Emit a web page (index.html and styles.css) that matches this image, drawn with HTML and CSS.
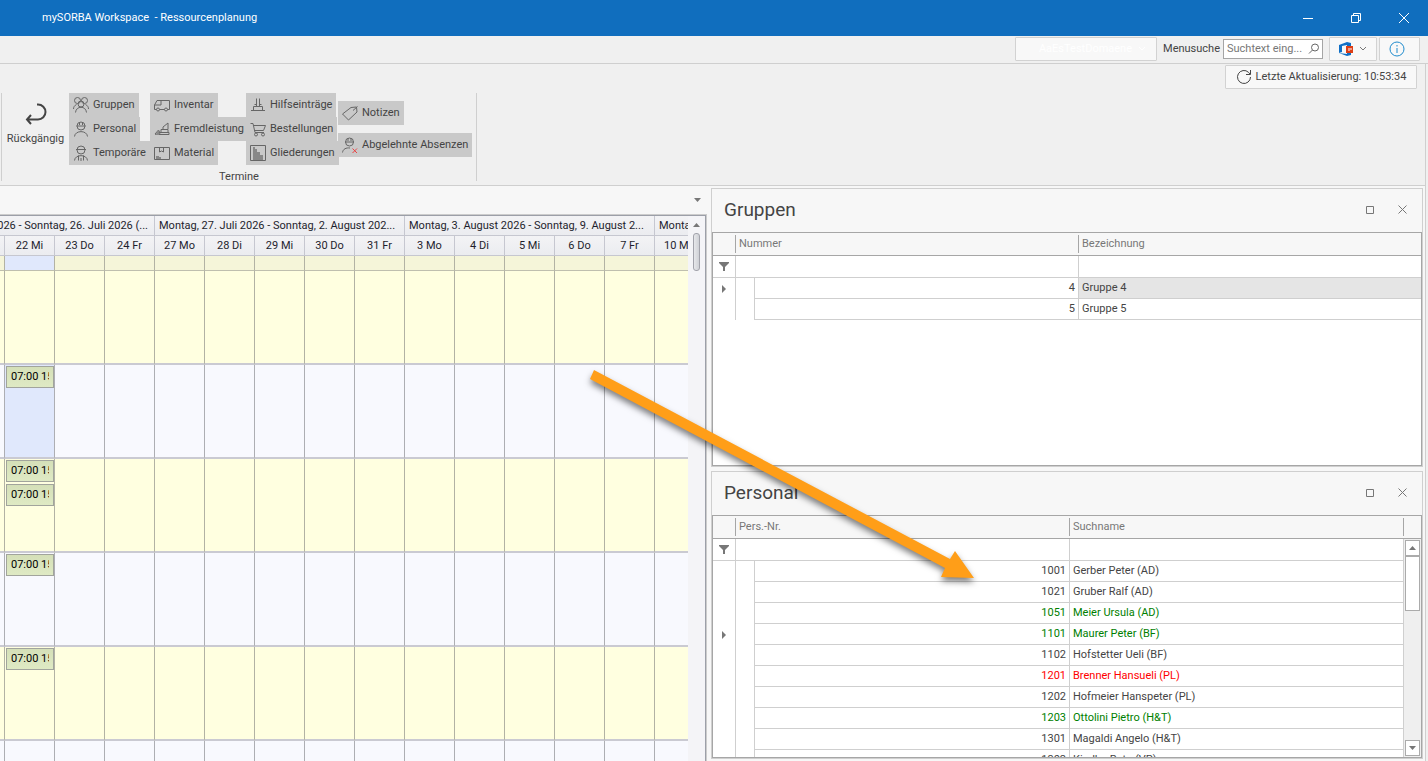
FILE: index.html
```
<!DOCTYPE html>
<html lang="de">
<head>
<meta charset="utf-8">
<title>mySORBA Workspace - Ressourcenplanung</title>
<link rel="stylesheet" href="styles.css">
</head>
<body>

<header class="titlebar">
  <h1>mySORBA Workspace&nbsp; - Ressourcenplanung</h1>
  <div class="window-buttons">
    <button type="button" aria-label="Minimieren"><svg width="12" height="12"><path d="M1 6.500h10"/></svg></button>
    <button type="button" aria-label="Wiederherstellen"><svg width="12" height="12"><path d="M1.500 3.500h7v7h-7zM3.500 3.500v-2h7v7h-2"/></svg></button>
    <button type="button" aria-label="Schliessen"><svg width="12" height="12"><path d="M1 1l10 10M11 1L1 11"/></svg></button>
  </div>
</header>

<div class="searchbar">
  <button type="button" class="btn domain">AaEsTestDomaene
    <svg width="8" height="6"><path d="M1 1l3 3 3-3"/></svg></button>
  <label for="menusuche">Menusuche</label>
  <div class="searchbox">
    <input type="text" id="menusuche" placeholder="Suchtext eing...">
    <svg width="12" height="12"><circle cx="7" cy="4.500" r="3.500"/><path d="M4.500 7L1 10.500"/></svg>
  </div>
  <button type="button" class="btn office" aria-label="Office">
    <svg width="15" height="14"><path fill="#0f6fc6" d="M0 3l8-3 4 1v12l-4 1-8-3 8 1V3L3 4v6L0 11z"/><path fill="#dc3e15" d="M7 4h7v7H7z"/><path fill="#fff" d="M9 6h4v2h-2v1H9z" opacity=".5"/></svg>
    <svg class="chevron" width="8" height="6"><path d="M1 1l3 3 3-3"/></svg>
  </button>
  <button type="button" class="btn info" aria-label="Info">
    <svg width="16" height="16"><circle cx="8" cy="8" r="7"/><path d="M8 7v5M8 4v1.500"/></svg>
  </button>
</div>

<section class="ribbon">
  <div class="refresh">
    <button type="button" class="btn">
      <svg width="16" height="16"><path d="M14.500 8A6.500 6.500 0 1 1 12.500 3.300L14 5M14.500 1v4.500H10"/></svg>
      Letzte Aktualisierung: 10:53:34
    </button>
  </div>
  <div class="group">
    <div class="tools">
      <button type="button" class="undo">
        <svg width="22" height="22"><path d="M12 1.500h1a7 7 0 0 1 0 15H2M6 12l-4 4.500L6 21"/></svg>
        Rückgängig
      </button>
      <div class="col c1">
        <button type="button" class="tool"><svg width="16" height="16"><circle cx="4.500" cy="3.500" r="3"/><circle cx="11.500" cy="3.500" r="3"/><circle cx="8" cy="7" r="3"/><path d="M2.500 15.500c.5-7 10.500-7 11 0M.5 12c0-2 1-3.500 3-4.500M15.500 12c0-2-1-3.500-3-4.500"/></svg>Gruppen</button>
        <button type="button" class="tool"><svg width="16" height="16"><circle cx="8" cy="5" r="4"/><path d="M3.500 5h9M6.500 1v3M9.500 1v3M1.500 15.500c.5-6.500 12.500-6.500 13 0"/></svg>Personal</button>
        <button type="button" class="tool"><svg width="16" height="16"><circle cx="8" cy="5" r="4"/><path d="M3 4.500h10M1.500 15.500c.5-6.500 12.500-6.500 13 0M5.500 10.500v5M10.500 10.500v5M8 13v3"/></svg>Temporäre</button>
      </div>
      <div class="col c2">
        <button type="button" class="tool"><svg width="16" height="16"><path d="M2.500 12.500h-2V8L3 3.500h12.500v9h-2M5.500 12.500h5M7 3.500V8H.5"/><circle cx="4" cy="12.500" r="1.500"/><circle cx="12" cy="12.500" r="1.500"/></svg>Inventar</button>
        <button type="button" class="tool"><svg width="16" height="16"><path d="M6 13.500h9v-2H5.500zM7 11V8.500h7V11M9 8V6l5-4v6M1 13.500h5M1 13l3.500-4L6 12"/><path class="solid" d="M1 14l4-5v5z"/></svg>Fremdleistung</button>
        <button type="button" class="tool"><svg width="16" height="16"><path d="M.5 2.500h15v12H.5zM5.500 3v4l2-1 2 1V3"/><path class="solid" d="M2 14v-3h3v1h2v2z"/></svg>Material</button>
      </div>
      <div class="col c3">
        <button type="button" class="tool"><svg width="16" height="16"><path d="M6.500 1.500v8M9.500 1.500v8M3.500 9.500h9M1 13.500h14M3.500 9.500v4M12.500 9.500v4M4.500 7.500h2M9.500 7.500h2"/></svg>Hilfseinträge</button>
        <button type="button" class="tool"><svg width="16" height="16"><path d="M.5 2.500h2.500l2 9h9M3.500 4.500h12l-2 5h-9"/><circle cx="6" cy="13.500" r="1.500"/><circle cx="13" cy="13.500" r="1.500"/></svg>Bestellungen</button>
        <button type="button" class="tool"><svg width="16" height="16"><path d="M.5.500h15v15H.5z"/><path class="solid" d="M3 2h2v2h2v3h3v3h3v5H3z"/></svg>Gliederungen</button>
      </div>
      <div class="col c4">
        <button type="button" class="tool"><svg width="16" height="16"><path d="M.5 9L9 2.500l5.500-.5.500 5L6.500 15zM11 5.500l4.500-4"/></svg>Notizen</button>
        <button type="button" class="tool"><svg width="16" height="16"><circle cx="7.500" cy="5" r="4"/><path d="M3 5h9M6 1v3M9 1v3M.5 15.500C1 12 4 10.500 8 11"/><path class="cross" d="M10.500 11.500l4.500 4.500M15 11.500l-4.500 4.500"/></svg>Abgelehnte Absenzen</button>
      </div>
    </div>
    <div class="caption">Termine</div>
  </div>
</section>

<main class="workspace">

  <section class="planner">
    <div class="tabstrip"><button type="button" aria-label="Fenster"><svg width="7" height="4"><path d="M0 0h7L3.500 4z"/></svg></button></div>
    <div class="schedule">
      <div class="viewport">
        <table class="calendar">
          <thead>
            <tr class="weeks">
              <th colspan="5" class="cut">Montag, 20. Juli 2026 - Sonntag, 26. Juli 2026 (...</th>
              <th colspan="5">Montag, 27. Juli 2026 - Sonntag, 2. August 202...</th>
              <th colspan="5">Montag, 3. August 2026 - Sonntag, 9. August 2...</th>
              <th colspan="5">Montag, 10. August 2026 - Sonntag, 16. Augus...</th>
            </tr>
            <tr class="days">
              <th>20 Mo</th><th>21 Di</th><th>22 Mi</th><th>23 Do</th><th>24 Fr</th>
              <th>27 Mo</th><th>28 Di</th><th>29 Mi</th><th>30 Do</th><th>31 Fr</th>
              <th>3 Mo</th><th>4 Di</th><th>5 Mi</th><th>6 Do</th><th>7 Fr</th>
              <th>10 Mo</th><th>11 Di</th><th>12 Mi</th><th>13 Do</th><th>14 Fr</th>
            </tr>
          </thead>
          <tbody>
            <tr class="allday"><td></td><td></td><td class="sel"></td><td></td><td></td><td></td><td></td><td></td><td></td><td></td><td></td><td></td><td></td><td></td><td></td><td></td><td></td><td></td><td></td><td></td></tr>
            <tr class="res"><td></td><td></td><td></td><td></td><td></td><td></td><td></td><td></td><td></td><td></td><td></td><td></td><td></td><td></td><td></td><td></td><td></td><td></td><td></td><td></td></tr>
            <tr class="res alt"><td></td><td></td><td class="sel"><div class="appt"><span>07:00 15:00</span></div></td><td></td><td></td><td></td><td></td><td></td><td></td><td></td><td></td><td></td><td></td><td></td><td></td><td></td><td></td><td></td><td></td><td></td></tr>
            <tr class="res"><td></td><td></td><td><div class="appt"><span>07:00 15:00</span></div><div class="appt"><span>07:00 15:00</span></div></td><td></td><td></td><td></td><td></td><td></td><td></td><td></td><td></td><td></td><td></td><td></td><td></td><td></td><td></td><td></td><td></td><td></td></tr>
            <tr class="res alt"><td></td><td></td><td><div class="appt"><span>07:00 15:00</span></div></td><td></td><td></td><td></td><td></td><td></td><td></td><td></td><td></td><td></td><td></td><td></td><td></td><td></td><td></td><td></td><td></td><td></td></tr>
            <tr class="res"><td></td><td></td><td><div class="appt"><span>07:00 15:00</span></div></td><td></td><td></td><td></td><td></td><td></td><td></td><td></td><td></td><td></td><td></td><td></td><td></td><td></td><td></td><td></td><td></td><td></td></tr>
            <tr class="res alt"><td></td><td></td><td></td><td></td><td></td><td></td><td></td><td></td><td></td><td></td><td></td><td></td><td></td><td></td><td></td><td></td><td></td><td></td><td></td><td></td></tr>
          </tbody>
        </table>
      </div>
      <div class="vscroll">
        <svg width="7" height="4"><path d="M0 4h7L3.500 0z"/></svg>
        <div class="thumb"></div>
      </div>
    </div>
  </section>

  <div class="panels">
    <section class="panel">
      <div class="panel-head">
        <h2>Gruppen</h2>
        <button type="button" aria-label="Maximieren"><svg width="8" height="8"><path d="M.5.500h7v7h-7z"/></svg></button>
        <button type="button" aria-label="Schliessen"><svg width="9" height="9"><path d="M.5.500l8 8M8.500.500l-8 8"/></svg></button>
      </div>
      <div class="grid">
        <table class="data">
          <colgroup><col class="mark"><col class="indent"><col class="num-g"><col></colgroup>
          <thead>
            <tr><th><div>&nbsp;</div></th><th colspan="2"><div>Nummer</div></th><th class="last"><div>Bezeichnung</div></th></tr>
            <tr class="filter">
              <td class="icon"><svg width="10" height="9"><path d="M0 0h10v1L6 5v4H4V5L0 1z"/></svg></td>
              <td colspan="2"><input type="text" aria-label="Filter Nummer"></td>
              <td class="last"><input type="text" aria-label="Filter Bezeichnung"></td>
            </tr>
          </thead>
          <tbody>
            <tr><td class="icon"><svg width="10" height="8"><path d="M3 0l4 4-4 4z"/></svg></td><td></td><td class="num">4</td><td class="last focused">Gruppe 4</td></tr>
            <tr><td></td><td></td><td class="num">5</td><td class="last">Gruppe 5</td></tr>
          </tbody>
        </table>
      </div>
    </section>

    <section class="panel">
      <div class="panel-head">
        <h2>Personal</h2>
        <button type="button" aria-label="Maximieren"><svg width="8" height="8"><path d="M.5.500h7v7h-7z"/></svg></button>
        <button type="button" aria-label="Schliessen"><svg width="9" height="9"><path d="M.5.500l8 8M8.500.500l-8 8"/></svg></button>
      </div>
      <div class="grid">
        <table class="data">
          <colgroup><col class="mark"><col class="indent"><col class="num-p"><col></colgroup>
          <thead>
            <tr><th><div>&nbsp;</div></th><th colspan="2"><div>Pers.-Nr.</div></th><th><div>Suchname</div></th></tr>
            <tr class="filter">
              <td class="icon"><svg width="10" height="9"><path d="M0 0h10v1L6 5v4H4V5L0 1z"/></svg></td>
              <td colspan="2"><input type="text" aria-label="Filter Pers.-Nr."></td>
              <td><input type="text" aria-label="Filter Suchname"></td>
            </tr>
          </thead>
          <tbody>
            <tr><td></td><td></td><td class="num">1001</td><td>Gerber Peter (AD)</td></tr>
            <tr><td></td><td></td><td class="num">1021</td><td>Gruber Ralf (AD)</td></tr>
            <tr class="green"><td></td><td></td><td class="num">1051</td><td>Meier Ursula (AD)</td></tr>
            <tr class="green"><td class="icon"><svg width="10" height="8"><path d="M3 0l4 4-4 4z"/></svg></td><td></td><td class="num">1101</td><td>Maurer Peter (BF)</td></tr>
            <tr><td></td><td></td><td class="num">1102</td><td>Hofstetter Ueli (BF)</td></tr>
            <tr class="red"><td></td><td></td><td class="num">1201</td><td>Brenner Hansueli (PL)</td></tr>
            <tr><td></td><td></td><td class="num">1202</td><td>Hofmeier Hanspeter (PL)</td></tr>
            <tr class="green"><td></td><td></td><td class="num">1203</td><td>Ottolini Pietro (H&amp;T)</td></tr>
            <tr><td></td><td></td><td class="num">1301</td><td>Magaldi Angelo (H&amp;T)</td></tr>
            <tr><td></td><td></td><td class="num">1302</td><td>Kindler Reto (VP)</td></tr>
          </tbody>
        </table>
        <div class="scrollbar">
          <button type="button" aria-label="Nach oben"><svg width="7" height="4"><path d="M0 4h7L3.500 0z"/></svg></button>
          <div class="thumb"></div>
          <button type="button" class="down" aria-label="Nach unten"><svg width="7" height="4"><path d="M0 0h7L3.500 4z"/></svg></button>
        </div>
      </div>
    </section>
  </div>
</main>

<!-- drag & drop hint -->
<svg class="arrow" width="1428" height="761" viewBox="0 0 1428 761">
  <path d="M594 370L950 559 955 551 974 578 941 577 945 568 590 379z"/>
</svg>

</body>
</html>
```
FILE: styles.css
```
* { box-sizing: border-box; }
body {
  margin: 0;
  height: 100vh;
  overflow: hidden;
  position: relative;
  display: flex;
  flex-direction: column;
  background: #f0f0f0;
  color: #444;
  font: 11px/14px Roboto, sans-serif;
}
button, input { font: inherit; color: inherit; padding: 0; border: 0; background: none; }
svg { display: block; flex: none; fill: none; stroke: currentColor; }
h1, h2 { margin: 0; font-weight: normal; }

/* title bar */
.titlebar {
  flex: none;
  height: 36px;
  padding-left: 42px;
  display: flex;
  align-items: center;
  justify-content: space-between;
  background: #106ebe;
  color: #fff;
}
.titlebar h1 { font-size: 11px; }
.window-buttons { display: flex; height: 100%; }
.window-buttons button { width: 48px; display: flex; align-items: center; justify-content: center; }

/* search row */
.btn {
  height: 24px;
  display: flex;
  align-items: center;
  justify-content: center;
  background: #f8f8f8;
  border: 1px solid #d2d2d2;
  border-radius: 1px;
}
.searchbar {
  flex: none;
  height: 28px;
  padding: 1px 8px 0 0;
  display: flex;
  align-items: flex-start;
  justify-content: flex-end;
  border-bottom: 1px solid #cfcfcf;
}
.searchbar label { margin: 5px 3px 0 6px; }
.domain { width: 142px; padding-right: 10px; gap: 6px; justify-content: flex-end; color: #fff; }
.searchbox {
  width: 100px;
  height: 20px;
  margin: 2px 6px 0 0;
  padding: 0 2px 0 3px;
  display: flex;
  align-items: center;
  background: #fff;
  border: 1px solid #a5a5a5;
  color: #666;
}
.searchbox input { flex: 1; min-width: 0; outline: 0; }
.searchbox input::placeholder { color: #777; opacity: 1; }
.office { width: 48px; gap: 5px; margin-right: 2px; }
.office svg { stroke: none; }
.office .chevron { stroke: #777; }
.info { width: 41px; padding-right: 5px; color: #1e8bcd; }

/* ribbon */
.ribbon {
  flex: none;
  height: 122px;
  margin-right: 2px;
  border-right: 1px solid #cfcfcf;
  border-bottom: 1px solid #cfcfcf;
}
.refresh { display: flex; justify-content: flex-end; padding: 1px 8px 0 0; }
.refresh .btn { width: 192px; gap: 4px; }
.group {
  width: 476px;
  height: 88px;
  margin: 4px 0 0 1px;
  border: solid #cfcfcf;
  border-width: 0 1px;
}
.tools { display: flex; height: 72px; }
.caption { text-align: center; line-height: 24px; }
.undo {
  flex: none;
  width: 67px;
  padding: 10px 0 19px;
  display: flex;
  flex-direction: column;
  align-items: center;
  justify-content: space-between;
}
.undo svg { stroke-width: 2; }
.col { flex: none; display: flex; flex-direction: column; align-items: flex-start; }
.c1 { width: 81px; }
.c2 { width: 96px; }
.c3 { width: 92px; }
.c4 { padding-top: 8px; gap: 8px; }
.tool {
  height: 24px;
  padding: 0 4px;
  display: flex;
  align-items: center;
  gap: 4px;
  background: #c9c9c9;
  white-space: nowrap;
}
.tool svg { color: #666; }
.tool .solid { fill: #888; stroke: none; }
.tool .cross { stroke: #e84545; }

/* workspace */
.workspace {
  flex: 1;
  min-height: 0;
  margin-right: 2px;
  padding-right: 2px;
  border-right: 1px solid #cfcfcf;
  display: grid;
  grid-template-columns: 707fr 712fr;
  grid-template-rows: 100%;
  gap: 4px;
  background: #f7f7f7;
}
.planner { min-width: 0; display: flex; flex-direction: column; }
.tabstrip {
  flex: none;
  height: 28px;
  padding-right: 6px;
  display: flex;
  justify-content: flex-end;
}
.tabstrip svg, .vscroll svg, .icon svg, .scrollbar svg { fill: #777; stroke: none; }
.schedule {
  flex: 1;
  min-height: 0;
  display: flex;
  border: solid #ccc;
  border-width: 1px 1px 0 0;
}
.viewport { flex: 1; min-width: 0; overflow: hidden; border-top: 1px solid #9c9fa8; }
.vscroll {
  width: 18px;
  padding: 7px 4px;
  display: flex;
  flex-direction: column;
  align-items: center;
  gap: 6px;
  background: #f4f4f7;
  border: solid #9c9fa8;
  border-width: 1px 1px 0 0;
}
.vscroll .thumb {
  width: 7px;
  height: 38px;
  border: 1px solid #a2a3ab;
  border-radius: 3px;
  background: linear-gradient(90deg, #e6e7ea, #cfd1d6);
}

/* scrolled to wednesday, the first two days are out of view */
.calendar {
  width: 1000px;
  margin-left: -95px;
  table-layout: fixed;
  border-spacing: 0;
  color: #1e1e2d;
}
.calendar th, .calendar td { padding: 0; border-right: 1px solid #b2b2a4; }
.calendar th {
  height: 20px;
  font-weight: normal;
  line-height: 18px;
  white-space: nowrap;
  overflow: hidden;
  background: linear-gradient(#f3f3f5, #ebecf0);
  border-right-color: #c6c7d0;
  border-bottom: 1px solid #c6c7d0;
}
.weeks th { padding: 0 4px; text-align: left; }
.weeks .cut { text-align: right; padding-right: 6px; }
.allday td { height: 15px; background: #f5f5d9; border-bottom: 1px solid #bfbfae; }
.res td { height: 94px; vertical-align: top; background: #ffffe0; border-bottom: 2px solid #cacad2; }
.alt td { background: #f8f9fe; border-right-color: #adaeb3; }
.calendar td.sel { background: #e0e8fc; }
.appt {
  height: 22px;
  margin: 1px 0 2px 1px;
  padding: 0 4px;
  background: linear-gradient(#d5e0b8, #dfeac4);
  border: 1px solid #a1a49c;
  color: #000;
}
.appt span { display: block; line-height: 20px; overflow: hidden; white-space: nowrap; }

/* docked panels */
.panels {
  min-width: 0;
  padding: 2px 0;
  display: grid;
  grid-template-rows: 279fr 288fr;
  gap: 4px;
}
.panel {
  min-height: 0;
  display: flex;
  flex-direction: column;
  border: 1px solid #cfcfcf;
}
.panel-head {
  flex: none;
  height: 43px;
  padding: 0 15px 2px 12px;
  display: flex;
  align-items: center;
  gap: 24px;
  color: #777;
}
.panel-head h2 { flex: 1; font-size: 19px; line-height: 24px; color: #444; }
.grid {
  flex: 1;
  min-height: 0;
  display: flex;
  align-items: flex-start;
  overflow: hidden;
  background: #fff;
  border: 1px solid #a6a6a6;
}
.data { flex: 1; min-width: 0; width: 100%; table-layout: fixed; border-spacing: 0; }
.mark { width: 23px; }
.indent { width: 19px; }
.num-g { width: 324px; }
.num-p { width: 315px; }
.data th {
  height: 23px;
  padding: 2px 0;
  background: #f7f7f7;
  border-bottom: 1px solid #a6a6a6;
  color: #777;
  font-weight: normal;
  text-align: left;
}
.data th div { height: 18px; line-height: 18px; padding-left: 3px; border-right: 1px solid #a6a6a6; }
.data td {
  height: 21px;
  padding: 0 3px;
  line-height: 18px;
  border: solid #cfcfcf;
  border-width: 0 1px 1px 0;
}
.data tbody td:nth-child(-n+2) { border-bottom: 0; }
.data .filter td { height: 22px; }
.filter input { display: block; width: 100%; height: 18px; outline: 0; }
.data td.icon { padding: 0 0 0 6px; }
.num { text-align: right; }
.data th.last div, .data td.last { border-right: 0; }
.focused { background: #e5e5e5; }
.green { color: #008000; }
.red { color: #f00; }

.scrollbar {
  flex: none;
  align-self: stretch;
  width: 17px;
  padding: 24px 1px 1px;
  display: flex;
  flex-direction: column;
  align-items: center;
  background: linear-gradient(#f7f7f7 22px, #a6a6a6 22px, #a6a6a6 23px, #efefef 23px);
}
.scrollbar button, .scrollbar .thumb {
  flex: none;
  width: 15px;
  height: 16px;
  display: flex;
  align-items: center;
  justify-content: center;
  background: #fff;
  border: 1px solid #ababab;
}
.scrollbar .thumb { height: 55px; }
.scrollbar .down { margin-top: auto; }

.arrow { position: absolute; top: 0; left: 0; pointer-events: none; }
.arrow path { fill: #ff9e18; stroke: none; filter: drop-shadow(0 4px 3px rgba(0, 0, 0, .5)); }
```
